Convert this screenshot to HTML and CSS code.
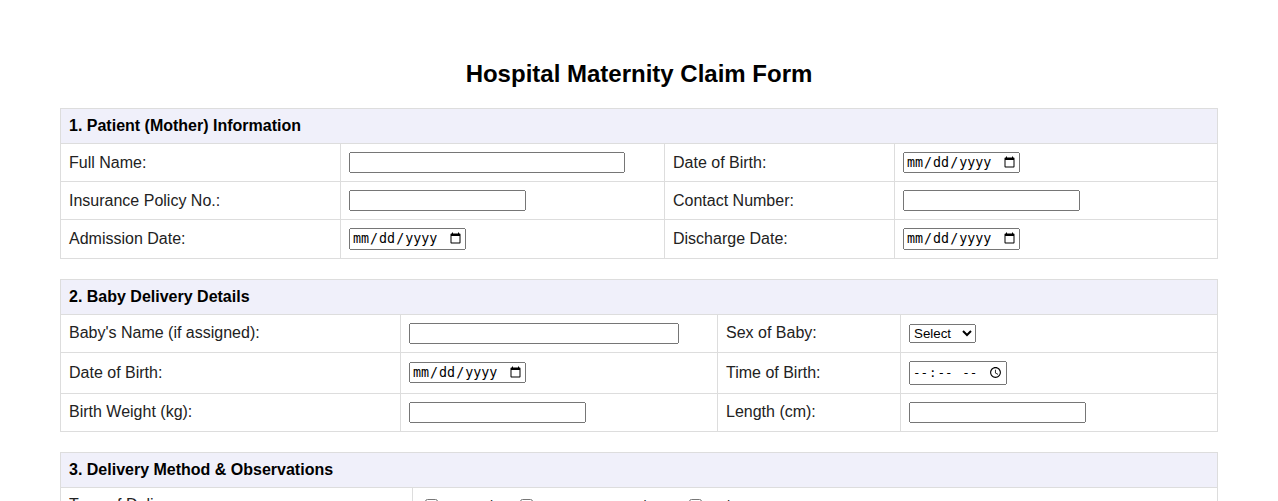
FILE: index.html
```html
<!DOCTYPE html>
<html lang="en">
<head>
<meta charset="utf-8">
<title>Hospital Maternity Claim Form</title>
<link rel="stylesheet" href="styles.css">
</head>
<body>
<div class="page">
  <h1 class="title">Hospital Maternity Claim Form</h1>

  <table class="section s1">
    <colgroup><col class="c1"><col class="c2"><col class="c3"><col class="c4"></colgroup>
    <tr><th colspan="4">1. Patient (Mother) Information</th></tr>
    <tr>
      <td>Full Name:</td><td><input type="text" class="wide"></td>
      <td>Date of Birth:</td><td><input type="date"></td>
    </tr>
    <tr>
      <td>Insurance Policy No.:</td><td><input type="text"></td>
      <td>Contact Number:</td><td><input type="text"></td>
    </tr>
    <tr>
      <td>Admission Date:</td><td><input type="date"></td>
      <td>Discharge Date:</td><td><input type="date"></td>
    </tr>
  </table>

  <table class="section s2">
    <colgroup><col class="c1"><col class="c2"><col class="c3"><col class="c4"></colgroup>
    <tr><th colspan="4">2. Baby Delivery Details</th></tr>
    <tr>
      <td>Baby's Name (if assigned):</td><td><input type="text" class="wide"></td>
      <td>Sex of Baby:</td><td><select><option>Select</option><option>Male</option><option>Female</option></select></td>
    </tr>
    <tr>
      <td>Date of Birth:</td><td><input type="date"></td>
      <td>Time of Birth:</td><td><input type="time"></td>
    </tr>
    <tr>
      <td>Birth Weight (kg):</td><td><input type="text"></td>
      <td>Length (cm):</td><td><input type="text"></td>
    </tr>
  </table>

  <table class="section s3">
    <colgroup><col class="c1"><col class="c2"></colgroup>
    <tr><th colspan="2">3. Delivery Method &amp; Observations</th></tr>
    <tr>
      <td>Type of Delivery:</td>
      <td>
        <div class="opts">
          <label class="opt"><input type="checkbox"><span>Normal</span></label>
          <label class="opt"><input type="checkbox"><span>Caesarean Section</span></label>
          <label class="opt"><input type="checkbox"><span>Other</span></label>
        </div>
      </td>
    </tr>
    <tr>
      <td>Complications (if any):</td><td><textarea rows="3"></textarea></td>
    </tr>
  </table>
</div>
</body>
</html>
```

FILE: styles.css
```css
html, body {
  margin: 0;
  padding: 0;
  background: #ffffff;
}

body {
  font-family: "Liberation Sans", Arial, sans-serif;
  font-size: 16px;
  color: #111111;
}

.page {
  padding: 40px 60px;
}

.title {
  margin: 20px 0 20px;
  text-align: center;
  font-size: 24px;
  font-weight: bold;
  color: #000000;
  line-height: 28px;
}

.section {
  width: 100%;
  border-collapse: collapse;
  table-layout: fixed;
  margin-bottom: 20px;
}

.section th,
.section td {
  border: 1px solid #dddddd;
  padding: 8px;
  text-align: left;
  vertical-align: middle;
}

.section th {
  background: #f0f0fa;
  font-weight: bold;
  color: #000000;
}

.section td {
  color: #222222;
}

.s1 .c1 { width: 280px; }
.s1 .c2 { width: 324px; }
.s1 .c3 { width: 230px; }
.s1 .c4 { width: auto; }

.s2 .c1 { width: 340px; }
.s2 .c2 { width: 317px; }
.s2 .c3 { width: 183px; }
.s2 .c4 { width: auto; }

.s3 .c1 { width: 352px; }
.s3 .c2 { width: auto; }

input[type="text"] {
  box-sizing: border-box;
  width: 177px;
}

input[type="date"] {
  box-sizing: border-box;
  width: 117px;
}

input[type="time"] {
  box-sizing: border-box;
  width: 98px;
  height: 24px;
  font-size: 12.5px;
}

input.wide {
  width: 90%;
}

.opts {
  display: flex;
  align-items: center;
  gap: 27px;
  padding: 2px 0 0 4px;
  font-size: 14px;
}

.opt {
  display: inline-flex;
  align-items: center;
  gap: 10px;
}

.opt input {
  margin: 0;
  width: 13px;
  height: 13px;
}

textarea {
  box-sizing: border-box;
  width: 90%;
}
```
